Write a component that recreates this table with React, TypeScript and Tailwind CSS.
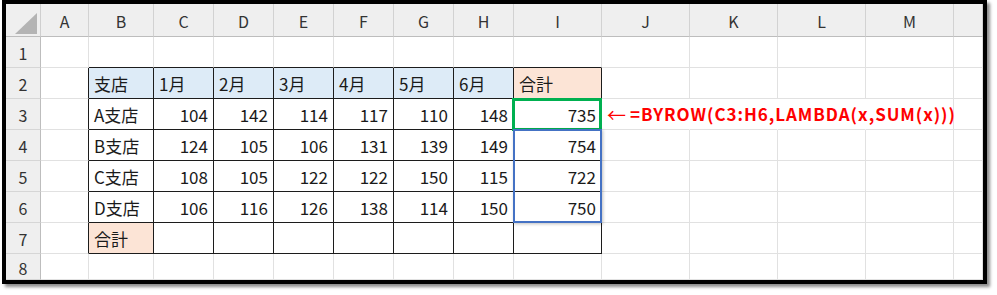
import * as React from "react"

const font = { fontFamily: '"Noto Sans CJK JP", "Noto Sans", sans-serif' }

const colLabels = ["A", "B", "C", "D", "E", "F", "G", "H", "I", "J", "K", "L", "M", ""]

// row index (1-based) -> cell values by column index (0 = A)
const data: Record<number, (string | number)[]> = {
  2: ["", "支店", "1月", "2月", "3月", "4月", "5月", "6月", "合計"],
  3: ["", "A支店", 104, 142, 114, 117, 110, 148, 735],
  4: ["", "B支店", 124, 105, 106, 131, 139, 149, 754],
  5: ["", "C支店", 108, 105, 122, 122, 150, 115, 722],
  6: ["", "D支店", 106, 116, 126, 138, 114, 150, 750],
  7: ["", "合計"],
}

const inTable = (r: number, c: number) => r >= 2 && r <= 7 && c >= 1 && c <= 8

const Cell = ({ r, c }: { r: number; c: number }) => {
  const v = data[r]?.[c] ?? ""
  // right edge dark if this cell is in the table, or it's the cell left of the table
  const darkRight = inTable(r, c) || (c === 0 && r >= 2 && r <= 7)
  const darkBottom = inTable(r, c) || (r === 1 && c >= 1 && c <= 8)
  // overflowing text in row 3 hides gridlines J..L
  const hideRight = r === 3 && c >= 9 && c <= 11

  let bg = "bg-white"
  if (r === 2 && c >= 1 && c <= 7) bg = "bg-[#ddebf7]"
  if ((r === 2 && c === 8) || (r === 7 && c === 1)) bg = "bg-[#fce4d6]"
  if (hideRight) bg = "bg-transparent"

  const right = hideRight ? "border-r-transparent" : darkRight ? "border-r-[#1c1c1c]" : "border-r-[#e1e1e1]"
  const bottom = darkBottom ? "border-b-[#1c1c1c]" : "border-b-[#e1e1e1]"
  const align = typeof v === "number" ? "justify-end pr-[5px]" : "justify-start pl-[5px]"

  return (
    <div className={`relative flex items-center pt-[2px] border-r border-b ${right} ${bottom} ${bg} ${align} text-[17px] text-[#1a1a1a]`}>
      {v}

      {/* active cell I3 */}
      {r === 3 && c === 8 && (
        <div className="absolute -left-[2px] -top-[1px] -right-[1px] -bottom-[2px] z-10 border-[3px] border-[#00b050] pointer-events-none" />
      )}

      {/* spill range I4:I6 */}
      {r === 4 && c === 8 && (
        <div className="absolute -left-[1px] -top-[1px] -right-[1px] h-[94px] z-10 border-2 border-[#4472c4] shadow-[1px_1px_3px_rgba(0,0,0,0.25)] pointer-events-none" />
      )}

      {/* annotation in J3 overflowing right */}
      {r === 3 && c === 9 && (
        <div className="absolute left-[5px] top-0 bottom-[1px] z-20 flex items-center pt-[1px] whitespace-nowrap text-[17px] text-[#ff0000]">
          <span className="font-normal mr-[4px] text-[19px] leading-none">←</span>
          <span className="font-bold tracking-[0.95px]">=BYROW(C3:H6,LAMBDA(x,SUM(x)))</span>
        </div>
      )}
    </div>
  )
}

export default function App() {
  const rows = [1, 2, 3, 4, 5, 6, 7, 8]

  return (
    <div className="w-[997px] h-[295px] bg-white" style={font}>
      <div className="ml-[2px] w-[985px] h-[284px] border-4 border-black shadow-[3px_3px_3px_rgba(0,0,0,0.45)] overflow-hidden">
        <div className="grid grid-cols-[35px_48px_65px_60px_60px_60px_60px_60px_60px_88px_88px_88px_88px_88px_29px] grid-rows-[33px_31px_31px_31px_31px_31px_31px_31px_26px]">
          {/* corner */}
          <div className="relative bg-[#efefef] border-r border-b border-r-[#cfcfcf] border-b-[#bdbdbd]">
            <svg className="absolute left-[9px] top-[9px]" width="22" height="21" viewBox="0 0 22 21">
              <polygon points="22,0 22,21 0,21" fill="#b4b4b4" />
            </svg>
          </div>
          {colLabels.map((l, i) => (
            <div
              key={`h${i}`}
              className="flex items-center justify-center pt-[2px] bg-[#efefef] border-r border-b border-r-[#d2d2d2] border-b-[#bdbdbd] text-[16px] text-[#333]"
            >
              {l}
            </div>
          ))}

          {rows.map((r) => (
            <React.Fragment key={r}>
              <div className="flex items-center justify-center pt-[2px] bg-[#efefef] border-r border-b border-r-[#bdbdbd] border-b-[#d6d6d6] text-[16px] text-[#333]">
                {r}
              </div>
              {colLabels.map((_, c) => (
                <Cell key={c} r={r} c={c} />
              ))}
            </React.Fragment>
          ))}
        </div>
      </div>
    </div>
  )
}
